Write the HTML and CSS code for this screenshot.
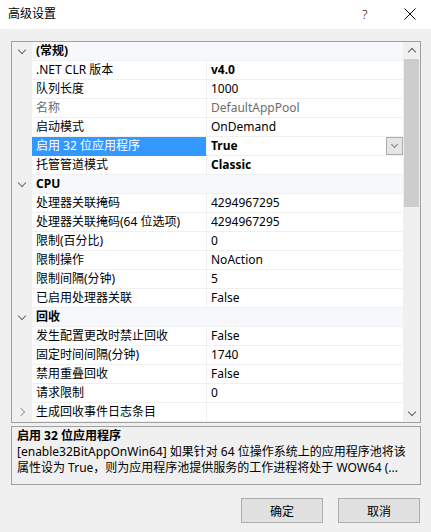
FILE: index.html
```html
<html>

<head>
    <link rel="stylesheet" href="styles.css">
</head>

<body>
    <div class="titlebar">
        <span class="title">高级设置</span>
        <span class="help">?</span>
        <svg class="close" width="12" height="12" viewBox="0 0 12 12">
            <path d="M0.5 0.5 L11.5 11.5 M11.5 0.5 L0.5 11.5" stroke="#000" stroke-width="1" fill="none" />
        </svg>
    </div>

    <div class="dialog">
        <div class="grid">
            <div class="rows">
                <div class="row cat"><span class="margin"><i class="chev down"></i></span><span class="name">(常规)</span></div>
                <div class="row"><span class="margin"></span><span class="name">.NET CLR 版本</span><span class="value bold">v4.0</span></div>
                <div class="row"><span class="margin"></span><span class="name">队列长度</span><span class="value">1000</span></div>
                <div class="row muted"><span class="margin"></span><span class="name">名称</span><span class="value">DefaultAppPool</span></div>
                <div class="row"><span class="margin"></span><span class="name">启动模式</span><span class="value">OnDemand</span></div>
                <div class="row selected"><span class="margin"></span><span class="name">启用 32 位应用程序</span><span class="value bold">True<span class="drop"><i class="chev down small"></i></span></span></div>
                <div class="row"><span class="margin"></span><span class="name">托管管道模式</span><span class="value bold">Classic</span></div>
                <div class="row cat"><span class="margin"><i class="chev down"></i></span><span class="name">CPU</span></div>
                <div class="row"><span class="margin"></span><span class="name">处理器关联掩码</span><span class="value">4294967295</span></div>
                <div class="row"><span class="margin"></span><span class="name">处理器关联掩码(64 位选项)</span><span class="value">4294967295</span></div>
                <div class="row"><span class="margin"></span><span class="name">限制(百分比)</span><span class="value">0</span></div>
                <div class="row"><span class="margin"></span><span class="name">限制操作</span><span class="value">NoAction</span></div>
                <div class="row"><span class="margin"></span><span class="name">限制间隔(分钟)</span><span class="value">5</span></div>
                <div class="row"><span class="margin"></span><span class="name">已启用处理器关联</span><span class="value">False</span></div>
                <div class="row cat"><span class="margin"><i class="chev down"></i></span><span class="name">回收</span></div>
                <div class="row"><span class="margin"></span><span class="name">发生配置更改时禁止回收</span><span class="value">False</span></div>
                <div class="row"><span class="margin"></span><span class="name">固定时间间隔(分钟)</span><span class="value">1740</span></div>
                <div class="row"><span class="margin"></span><span class="name">禁用重叠回收</span><span class="value">False</span></div>
                <div class="row"><span class="margin"></span><span class="name">请求限制</span><span class="value">0</span></div>
                <div class="row"><span class="margin"><i class="chev right"></i></span><span class="name">生成回收事件日志条目</span><span class="value"></span></div>
            </div>
            <div class="scrollbar">
                <div class="arrow"><i class="chev up"></i></div>
                <div class="track"><div class="thumb"></div></div>
                <div class="arrow"><i class="chev down"></i></div>
            </div>
        </div>

        <div class="desc">
            <div class="desc__title">启用 32 位应用程序</div>
            <div class="desc__line">[enable32BitAppOnWin64] 如果针对 64 位操作系统上的应用程序池将该</div>
            <div class="desc__line">属性设为 True，则为应用程序池提供服务的工作进程将处于 WOW64 (...</div>
        </div>

        <div class="buttons">
            <button class="btn">确定</button>
            <button class="btn">取消</button>
        </div>
    </div>
</body>

</html>
```

FILE: styles.css
```css
body {
    margin: 0;
    padding: 0;
    width: 431px;
    height: 532px;
    overflow: hidden;
    background-color: #f0f0f0;
    color: #000;
    font-family: "Noto Sans", "Noto Sans CJK SC", sans-serif;
    font-size: 12px;
}

.titlebar {
    height: 29px;
    background-color: #fff;
    display: flex;
    align-items: center;
    position: relative;
}

.title {
    margin-left: 8px;
    margin-top: -3px;
}

.help {
    position: absolute;
    left: 362px;
    top: 5px;
    font-size: 13px;
    font-weight: 300;
}

.close {
    position: absolute;
    left: 404px;
    top: 8px;
}

.dialog {
    padding: 12px 10px 0 11px;
}

/* property grid */
.grid {
    display: flex;
    height: 380px;
    border: 1px solid #a0a0a0;
    background-color: #fff;
}

.rows {
    width: 391px;
    display: flex;
    flex-flow: column;
}

.row {
    display: flex;
    height: 19px;
    line-height: 18px;
    flex: none;
}

.margin {
    width: 20px;
    flex: none;
    background-color: #f0f0f0;
    position: relative;
}

.name {
    width: 170px;
    padding-left: 4px;
    border-bottom: 1px solid #f0f0f0;
    border-right: 1px solid #f0f0f0;
    white-space: nowrap;
    overflow: hidden;
}

.value {
    flex: 1;
    padding-left: 4px;
    border-bottom: 1px solid #f0f0f0;
    position: relative;
    white-space: nowrap;
}

.bold {
    font-weight: 700;
}

.row.cat {
    background-color: #f6f8fb;
}

.row.cat .name {
    flex: 1;
    width: auto;
    font-weight: 700;
    border-right: none;
    border-bottom: 1px solid #eef0f4;
}

.row.muted {
    color: #6d6d6d;
}

.row.selected .name {
    background-color: #3399ff;
    color: #fff;
    border-bottom-color: #3399ff;
}

.drop {
    position: absolute;
    right: 0;
    top: 0;
    width: 15px;
    height: 16px;
    border: 1px solid #adadad;
    background-color: #e5e5e5;
}

/* chevrons */
.chev {
    position: absolute;
    width: 5px;
    height: 5px;
    border-right: 1px solid #6b6b6b;
    border-bottom: 1px solid #6b6b6b;
}

.chev.down {
    left: 7px;
    top: 5px;
    transform: rotate(45deg);
}

.chev.right {
    left: 6px;
    top: 6px;
    border-color: #a0a0a0;
    transform: rotate(-45deg);
}

.chev.up {
    left: 6px;
    top: 7px;
    border-color: #606060;
    transform: rotate(-135deg);
}

.chev.small {
    left: 5px;
    top: 4px;
    width: 4px;
    height: 4px;
    border-color: #808080;
}

/* scrollbar */
.scrollbar {
    width: 17px;
    display: flex;
    flex-flow: column;
    background-color: #f0f0f0;
}

.arrow {
    height: 17px;
    position: relative;
    flex: none;
}

.scrollbar .arrow .chev.down {
    left: 6px;
    top: 4px;
    border-color: #606060;
}

.track {
    flex: 1;
    padding: 0 1px;
}

.thumb {
    height: 148px;
    background-color: #cdcdcd;
}

/* description */
.desc {
    margin-top: 3px;
    height: 56px;
    border: 1px solid #a0a0a0;
    padding: 1px 5px 0 5px;
    line-height: 16px;
}

.desc__title {
    font-weight: 700;
}

.desc__line {
    white-space: nowrap;
    overflow: hidden;
}

/* buttons */
.buttons {
    display: flex;
    justify-content: flex-end;
    gap: 15px;
    margin-top: 13px;
    padding-right: 1px;
}

.btn {
    width: 82px;
    height: 25px;
    border: 1px solid #adadad;
    background-color: #e1e1e1;
    font-family: "Noto Sans", "Noto Sans CJK SC", sans-serif;
    font-size: 12px;
    color: #000;
    padding: 0;
}
```
